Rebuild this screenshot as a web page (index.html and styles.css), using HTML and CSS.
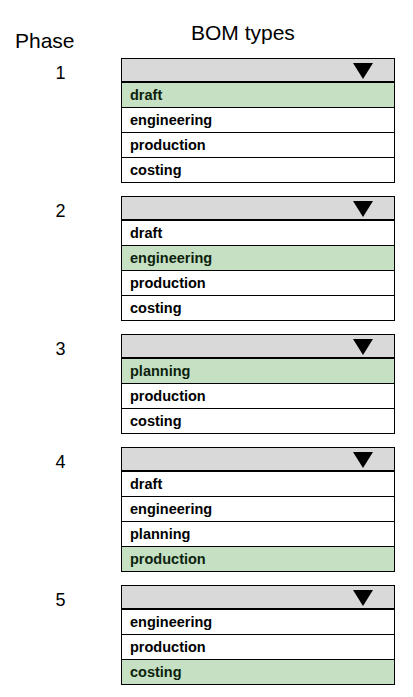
FILE: index.html
```html
<!DOCTYPE html>
<html lang="en">
<head>
    <meta charset="UTF-8">
    <meta name="viewport" content="width=device-width, initial-scale=1.0">
    <title>BOM types per phase</title>
    <link rel="stylesheet" href="styles.css">
</head>
<body>
    <div class="heading">
        <div class="heading-phase">Phase</div>
        <div class="heading-bom">BOM types</div>
    </div>

    <!-- Phase 1 -->
    <div class="phase">
        <div class="phase-num">1</div>
        <div class="bom-list">
            <div class="bom-head"><span class="arrow"></span></div>
            <div class="bom-item selected">draft</div>
            <div class="bom-item">engineering</div>
            <div class="bom-item">production</div>
            <div class="bom-item">costing</div>
        </div>
    </div>

    <!-- Phase 2 -->
    <div class="phase">
        <div class="phase-num">2</div>
        <div class="bom-list">
            <div class="bom-head"><span class="arrow"></span></div>
            <div class="bom-item">draft</div>
            <div class="bom-item selected">engineering</div>
            <div class="bom-item">production</div>
            <div class="bom-item">costing</div>
        </div>
    </div>

    <!-- Phase 3 -->
    <div class="phase">
        <div class="phase-num">3</div>
        <div class="bom-list">
            <div class="bom-head"><span class="arrow"></span></div>
            <div class="bom-item selected">planning</div>
            <div class="bom-item">production</div>
            <div class="bom-item">costing</div>
        </div>
    </div>

    <!-- Phase 4 -->
    <div class="phase">
        <div class="phase-num">4</div>
        <div class="bom-list">
            <div class="bom-head"><span class="arrow"></span></div>
            <div class="bom-item">draft</div>
            <div class="bom-item">engineering</div>
            <div class="bom-item">planning</div>
            <div class="bom-item selected">production</div>
        </div>
    </div>

    <!-- Phase 5 -->
    <div class="phase">
        <div class="phase-num">5</div>
        <div class="bom-list">
            <div class="bom-head"><span class="arrow"></span></div>
            <div class="bom-item">engineering</div>
            <div class="bom-item">production</div>
            <div class="bom-item selected">costing</div>
        </div>
    </div>
</body>
</html>
```

FILE: styles.css
```css
body {
    font-family: "Liberation Sans", Arial, sans-serif;
    margin: 0;
    background-color: #fff;
    color: #000;
}
.heading {
    display: flex;
    align-items: flex-start;
    box-sizing: border-box;
    height: 58px;
    padding-top: 22px;
    font-size: 21px;
    line-height: 21px;
}
.heading-phase {
    box-sizing: border-box;
    width: 191px;
    padding-left: 15px;
    margin-top: 8px;
}
.phase {
    display: flex;
    align-items: flex-start;
    margin-bottom: 13px;
}
.phase-num {
    width: 121px;
    padding-top: 6px;
    text-align: center;
    font-size: 18px;
    line-height: 18px;
}
.bom-list {
    box-sizing: border-box;
    width: 274px;
    border: 1px solid #000;
}
.bom-head {
    display: flex;
    justify-content: flex-end;
    align-items: flex-start;
    height: 18px;
    padding: 4px 21px 0 0;
    background-color: #d9d9d9;
    border-bottom: 2px solid #000;
}
.arrow {
    width: 0;
    height: 0;
    border-left: 10px solid transparent;
    border-right: 10px solid transparent;
    border-top: 16px solid #000;
}
.bom-item {
    height: 24px;
    line-height: 24px;
    padding-left: 8px;
    font-size: 14.5px;
    font-weight: bold;
}
.bom-item + .bom-item {
    border-top: 1px solid #000;
}
.selected {
    background-color: #c5e0c3;
    color: #0c1f0c;
}
```
